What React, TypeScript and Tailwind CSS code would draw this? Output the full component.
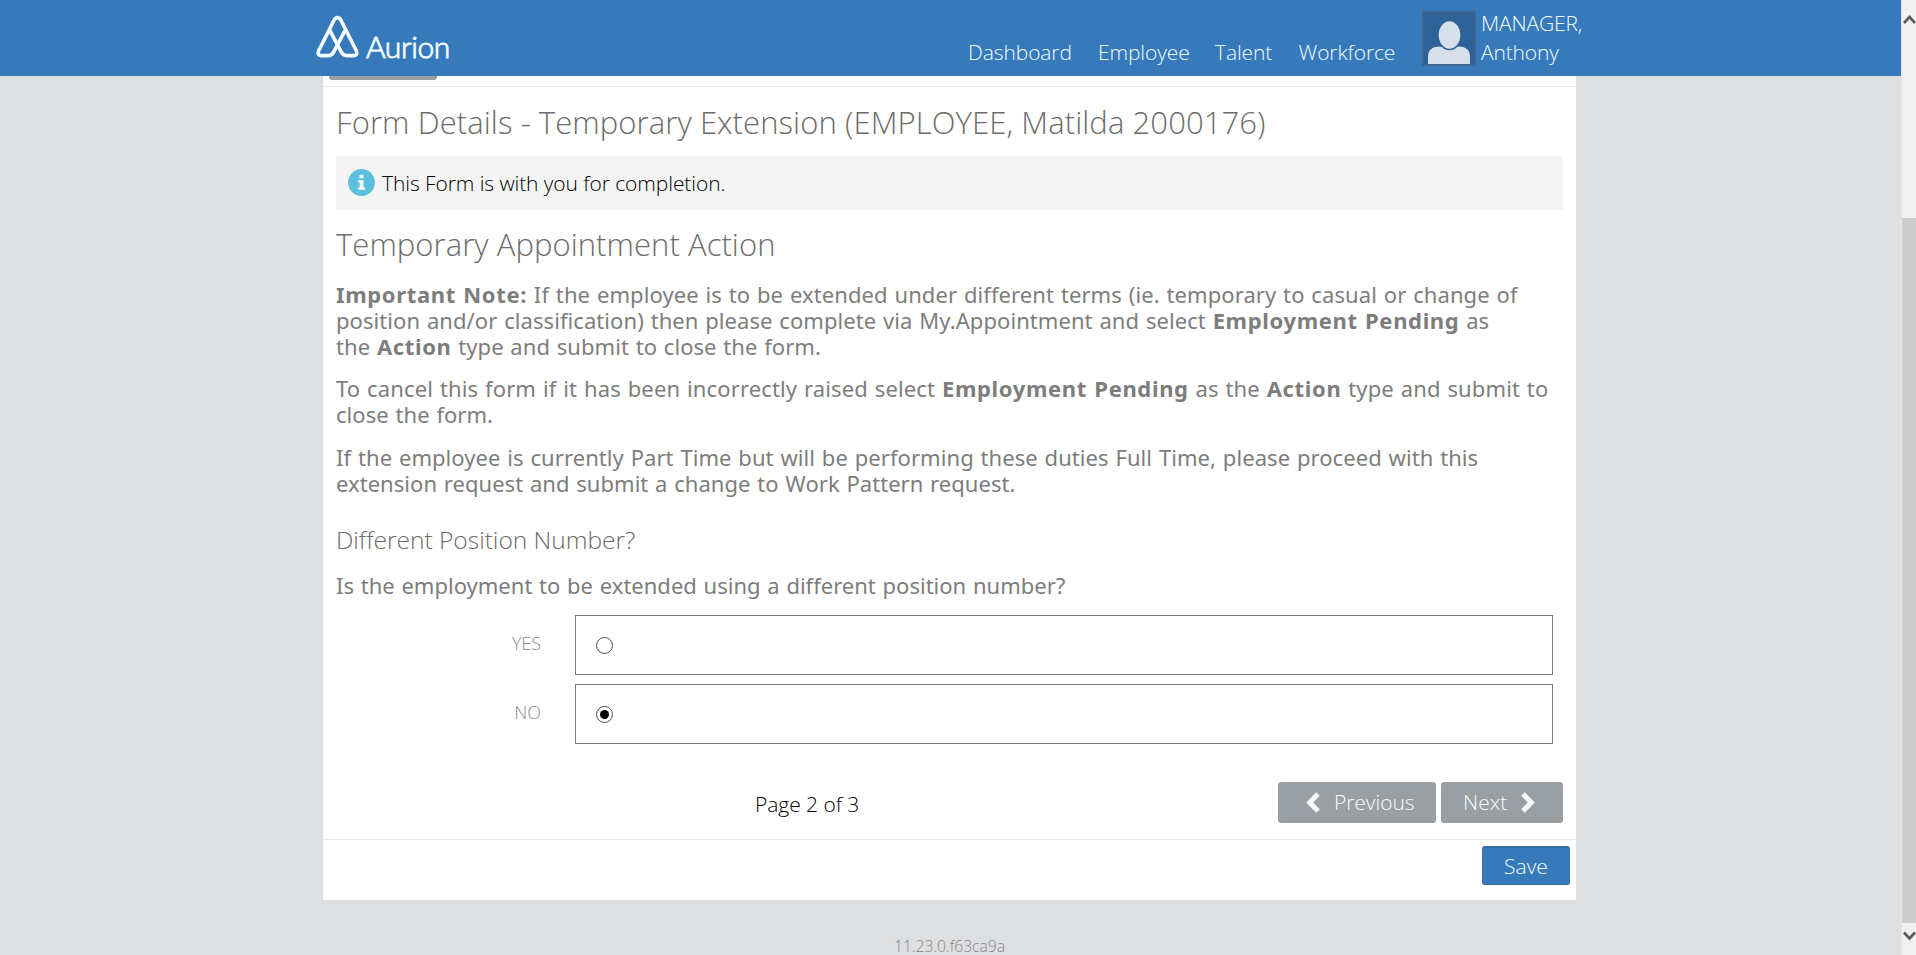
import type { ReactNode } from "react";

const navItems = [
  { label: "Dashboard", className: "w-[130px]" },
  { label: "Employee", className: "w-[117px]" },
  { label: "Talent", className: "w-[83.5px]" },
  { label: "Workforce", className: "w-[123.5px]" },
];

function Logo() {
  return (
    <div className="flex h-full w-[140px] items-start text-[#f4fdff]">
      <svg viewBox="315 13 45 46" className="mt-[13px] h-[46px] w-[45px] shrink-0" fill="none" stroke="currentColor" strokeWidth="3.6" strokeLinecap="round" strokeLinejoin="round">
        <path d="M337.5 17.6 Q335.4 17.6 334 20.2 L318.8 50.5 Q316.8 55.6 321.2 55.6 L328.6 55.6 Q331.8 55.6 333.6 52.2 L345.3 30.2" />
        <path d="M337.5 17.6 Q339.6 17.6 341 20.2 L356.2 50.5 Q358.2 55.6 353.8 55.6 L346.4 55.6 Q343.2 55.6 341.4 52.2 L329.7 30.2" />
      </svg>
      <span className="mt-[26px] ml-[6px] font-['Lato',sans-serif] text-[30px] leading-[40px] tracking-[-0.4px] [-webkit-text-stroke:0.9px_currentColor]">Aurion</span>
    </div>
  );
}

function Avatar() {
  return (
    <div className="mt-[11px] h-[55px] w-[54px] shrink-0 border-2 border-[#40658f] bg-[#2c6297]">
      <svg viewBox="0 0 50 51" className="h-full w-full" fill="#d6dfea">
        <path d="M4 51 V44 Q4 34 15 33.5 Q19 33.4 20 35 Q25 38 30 35 Q31 33.4 35 33.5 Q46 34 46 44 V51 Z" />
        <ellipse cx="25.5" cy="22" rx="11.6" ry="14.6" stroke="#2c6297" strokeWidth="1.5" />
      </svg>
    </div>
  );
}

function Header() {
  return (
    <header className="flex h-[76px] shrink-0 bg-[#377abc] pl-[315px] text-[21px] font-light whitespace-nowrap text-[#f2fcff]">
      <Logo />
      <nav className="ml-[513px] flex pt-[37px] leading-[30px] tracking-[-0.1px]">
        {navItems.map((n) => (
          <a key={n.label} className={n.className}>{n.label}</a>
        ))}
      </nav>
      <div className="flex">
        <Avatar />
        <div className="ml-[5px] pt-[9px] leading-[29px] tracking-[-0.15px]">
          <div>MANAGER,</div>
          <div>Anthony</div>
        </div>
      </div>
    </header>
  );
}

function Line({ className, children }: { className: string; children: ReactNode }) {
  return <span className={`block ${className}`}>{children}</span>;
}

function B({ children }: { children: ReactNode }) {
  return <b className="font-bold tracking-[0.65px]">{children}</b>;
}

function RadioRow({ label, checked }: { label: string; checked?: boolean }) {
  return (
    <div className="flex h-[60px]">
      <span className="w-[205px] pt-[15px] text-right text-[18px] leading-[26px] font-light text-[#858a8c]">{label}</span>
      <div className="ml-[34px] flex w-[978px] items-center border border-[#777b7d] pl-[20px]">
        <span className="flex h-[17px] w-[17px] items-center justify-center rounded-full border border-[#4c4c4c]">
          {checked && <span className="h-[9px] w-[9px] rounded-full bg-black" />}
        </span>
      </div>
    </div>
  );
}

function Chevron({ flip }: { flip?: boolean }) {
  return (
    <svg viewBox="0 0 14 21" className="h-[21px] w-[14px]" fill="none" stroke="currentColor" strokeWidth="5">
      <path d={flip ? "M2 2 L10.3 10.5 L2 19" : "M12 2 L3.7 10.5 L12 19"} />
    </svg>
  );
}

function ScrollBar() {
  return (
    <div className="flex h-full w-[15px] shrink-0 flex-col border-l border-[#e3e5e8] bg-[#f0f0f0] text-[#5a5a5a]">
      <svg viewBox="0 0 14 218" className="h-[218px] w-full" fill="none" stroke="currentColor" strokeWidth="2.6">
        <path d="M2 23 L7.5 17 L13 23" />
      </svg>
      <div className="h-[705px] bg-[#cdcdcd]" />
      <svg viewBox="0 0 14 32" className="h-8 w-full" fill="none" stroke="currentColor" strokeWidth="2.6">
        <path d="M2 9.5 L7.5 15.5 L13 9.5" />
      </svg>
    </div>
  );
}

export default function App() {
  return (
    <div className="flex h-[955px] w-full overflow-hidden bg-[#dedfe1] font-['Open_Sans',sans-serif]">
      <div className="flex min-w-0 flex-1 flex-col">
        <Header />
        <main className="ml-[323px] flex h-[824px] w-[1253px] shrink-0 flex-col bg-white whitespace-nowrap">
          <div className="h-[11px] shrink-0 border-b border-[#e9eaeb] pl-[6px]">
            <div className="h-[4px] w-[108px] rounded-b-[3px] bg-[#9a9fa3]" />
          </div>
          <div className="flex h-[752px] shrink-0 flex-col px-[13px] text-[#6c6c6c]">
            <h1 className="mt-[15px] text-[31px] leading-[40px] font-light tracking-[0.09px]">Form Details - Temporary Extension (EMPLOYEE, Matilda 2000176)</h1>
            <div className="mt-[14px] flex h-[54px] items-center bg-[#f4f4f4] pl-[12px] text-black">
              <svg viewBox="0 0 27 27" className="-mt-[1px] h-[27px] w-[27px]">
                <circle cx="13.5" cy="13.5" r="13.4" fill="#5bc0de" />
                <path d="M11.5 5.8 H15.5 V9.3 H11.5 Z M10 11.2 H15.5 V18.4 H17.2 V20.8 H10 V18.4 H11.7 V13.5 H10 Z" fill="#f7fdff" />
              </svg>
              <span className="ml-[7px] text-[21px] leading-[30px] font-light tracking-[-0.08px]">This Form is with you for completion.</span>
            </div>
            <h2 className="mt-[14px] text-[31px] leading-[40px] font-light tracking-[0.06px]">Temporary Appointment Action</h2>

            <div className="font-['Noto_Sans',sans-serif] text-[22px] leading-[26px] text-[#7d7d7d] [word-spacing:1px]">
              <p className="mt-[17px]">
                <Line className="tracking-[0.09px]"><B>Important Note:</B> If the employee is to be extended under different terms (ie. temporary to casual or change of</Line>
                <Line className="tracking-[0.07px]">position and/or classification) then please complete via My.Appointment and select <B>Employment Pending</B> as</Line>
                <Line className="tracking-[0.05px]">the <B>Action</B> type and submit to close the form.</Line>
              </p>
              <p className="mt-[16px]">
                <Line className="tracking-[0.13px]">To cancel this form if it has been incorrectly raised select <B>Employment Pending</B> as the <B>Action</B> type and submit to</Line>
                <Line className="tracking-[0.05px]">close the form.</Line>
              </p>
              <p className="mt-[17px]">
                <Line className="tracking-[0.07px]">If the employee is currently Part Time but will be performing these duties Full Time, please proceed with this</Line>
                <Line className="tracking-[0.04px]">extension request and submit a change to Work Pattern request.</Line>
              </p>
            </div>

            <h3 className="mt-[27px] text-[24.6px] leading-[34px] font-light tracking-[-0.04px]">Different Position Number?</h3>
            <p className="mt-[15px] font-['Noto_Sans',sans-serif] text-[22px] leading-[26px] tracking-[0.01px] text-[#7d7d7d] [word-spacing:1px]">
              Is the employment to be extended using a different position number?
            </p>
            <div className="mt-[17px] flex flex-col gap-[9px]">
              <RadioRow label="YES" />
              <RadioRow label="NO" checked />
            </div>

            <div className="mt-[38px] flex h-[41px] items-start text-[21px] font-light">
              <span className="ml-[419px] w-[523px] pt-[7px] leading-[30px] tracking-[-0.05px] text-black">Page 2 of 3</span>
              <div className="flex gap-[5px] text-[#f8fbfc]">
                <button className="flex h-[41px] w-[158px] items-center rounded-[3px] bg-[#9a9fa3] pl-[28px]">
                  <Chevron />
                  <span className="-mt-[1px] ml-[14px] leading-[30px] tracking-[-0.05px]">Previous</span>
                </button>
                <button className="flex h-[41px] w-[122px] items-center rounded-[3px] bg-[#9a9fa3] pl-[22px]">
                  <span className="-mt-[1px] w-[58px] text-left leading-[30px]">Next</span>
                  <Chevron flip />
                </button>
              </div>
            </div>
          </div>
          <div className="flex flex-1 items-start justify-end border-t border-[#e9eaeb] pt-[6px] pr-[6px]">
            <button className="flex h-[39px] w-[88px] justify-center rounded-[3px] border border-t-2 border-[#3470ad] bg-[#377abc] pt-[3px] text-[21px] leading-[30px] font-light text-[#f2fcff]">Save</button>
          </div>
        </main>
        <footer className="ml-[323px] w-[1253px] pt-[36px] text-center text-[15.7px] leading-[19px] font-light tracking-[-0.05px] text-[#85888b]"><div className="pt-[1px]">11.23.0.f63ca9a</div></footer>
      </div>
      <ScrollBar />
    </div>
  );
}
